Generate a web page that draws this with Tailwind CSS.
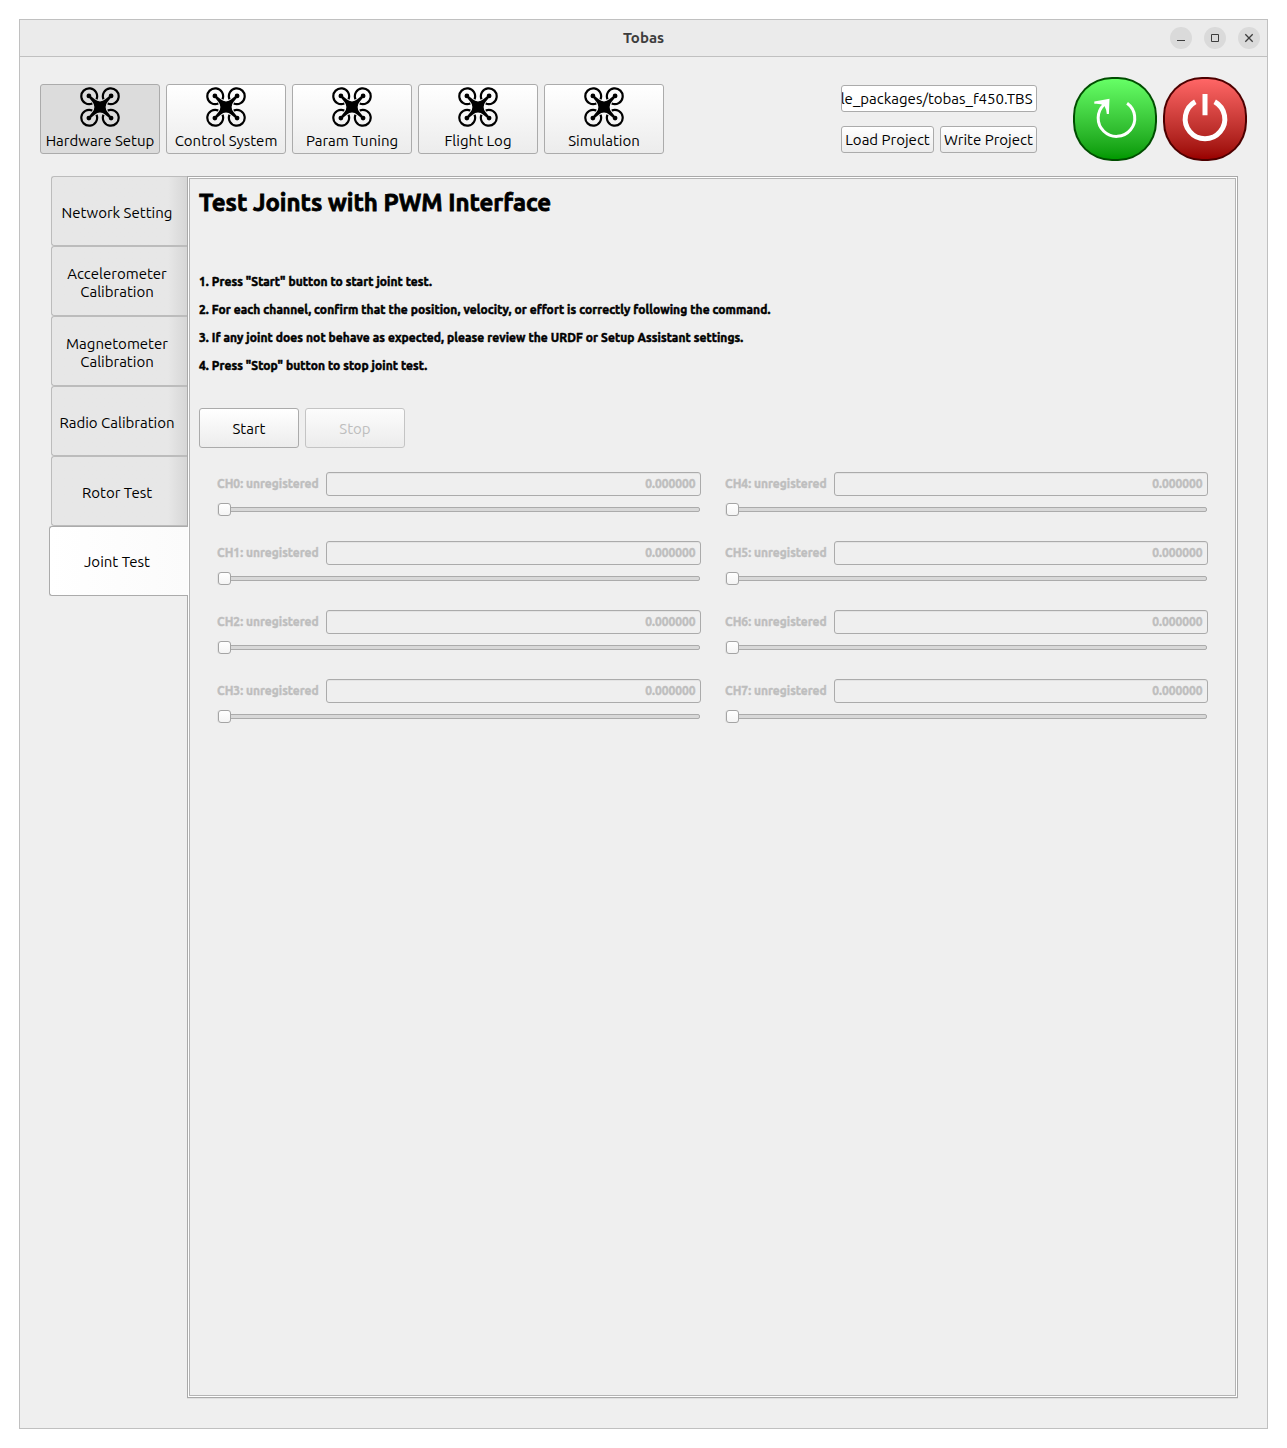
<!DOCTYPE html>
<html lang="en">
<head>
<meta charset="utf-8">
<title>Tobas</title>
<script src="https://cdn.jsdelivr.net/npm/@tailwindcss/browser@4"></script>
</head>
<body class="h-[1448px] w-[1287px] overflow-hidden bg-white p-[19px] font-['Ubuntu','Noto_Sans',sans-serif] text-[15px] leading-[18px] text-black">
<svg class="hidden">
  <symbol id="drone" viewBox="0 0 40 40">
    <g id="rotor">
      <path d="M16.500 12.300A7.900 7.900 0 1 0 12.300 16.500" fill="none" stroke="#000" stroke-width="2.200"/>
      <circle cx="8.9" cy="8.9" r="2.4"/>
      <path d="M8.200 9.800L12.300 14.700Q14.400 17 14.400 20L20 20L20 14.400Q17 14.400 14.700 12.300L9.800 8.200Z"/>
    </g>
    <use href="#rotor" transform="rotate(90 20 20)"/>
    <use href="#rotor" transform="rotate(180 20 20)"/>
    <use href="#rotor" transform="rotate(270 20 20)"/>
    <path d="M15 15h10v10h-10z"/>
  </symbol>
</svg>

<div class="flex h-[1410px] w-[1249px] flex-col border border-[#c0c0c0] bg-[#efefef]">
  <header class="grid h-[37px] shrink-0 grid-cols-[1fr_auto_1fr] items-center border-b border-[#c0c0c0] bg-[#ebebeb]">
    <h1 class="col-start-2 text-[15px] font-bold text-[#3d3d3d]">Tobas</h1>
    <div class="flex justify-end gap-3 pr-[7px]">
      <svg class="size-[22px]" viewBox="0 0 22 22"><circle cx="11" cy="11" r="11" fill="#dadada"/><path d="M7 13.500h8" stroke="#3d3d3d"/></svg>
      <svg class="size-[22px]" viewBox="0 0 22 22"><circle cx="11" cy="11" r="11" fill="#dadada"/><path d="M7.500 7.500h7v7h-7z" fill="none" stroke="#3d3d3d"/></svg>
      <svg class="size-[22px]" viewBox="0 0 22 22"><circle cx="11" cy="11" r="11" fill="#dadada"/><path d="M7.300 7.300l7.400 7.400M14.700 7.300l-7.400 7.400" stroke="#3d3d3d" stroke-width="1.300"/></svg>
    </div>
  </header>

  <div class="flex h-[119px] shrink-0 pl-5 pr-5 pt-5">
    <nav class="flex gap-1.5 pt-[7px]">
      <button class="flex h-[70px] w-[120px] flex-col items-center rounded-[3px] border border-[#ababab] bg-[#dcdcdc] pt-0.5"><svg class="size-10"><use href="#drone"/></svg><span class="mt-[5px] whitespace-nowrap">Hardware Setup</span></button>
      <button class="flex h-[70px] w-[120px] flex-col items-center rounded-[3px] border border-[#ababab] bg-linear-to-b from-white to-[#ececec] pt-0.5"><svg class="size-10"><use href="#drone"/></svg><span class="mt-[5px] whitespace-nowrap">Control System</span></button>
      <button class="flex h-[70px] w-[120px] flex-col items-center rounded-[3px] border border-[#ababab] bg-linear-to-b from-white to-[#ececec] pt-0.5"><svg class="size-10"><use href="#drone"/></svg><span class="mt-[5px] whitespace-nowrap">Param Tuning</span></button>
      <button class="flex h-[70px] w-[120px] flex-col items-center rounded-[3px] border border-[#ababab] bg-linear-to-b from-white to-[#ececec] pt-0.5"><svg class="size-10"><use href="#drone"/></svg><span class="mt-[5px] whitespace-nowrap">Flight Log</span></button>
      <button class="flex h-[70px] w-[120px] flex-col items-center rounded-[3px] border border-[#ababab] bg-linear-to-b from-white to-[#ececec] pt-0.5"><svg class="size-10"><use href="#drone"/></svg><span class="mt-[5px] whitespace-nowrap">Simulation</span></button>
    </nav>
    <div class="ml-auto mr-9 flex w-[196px] flex-col gap-3.5 pt-2">
      <div class="flex h-[27px] items-center justify-end overflow-hidden rounded-[3px] border border-[#ababab] bg-white pr-[3.500px]"><span class="whitespace-nowrap">le_packages/tobas_f450.TBS</span></div>
      <div class="flex gap-1.5">
        <button class="h-[27px] w-[93px] whitespace-nowrap rounded-[3px] border border-[#ababab] bg-linear-to-b from-white to-[#ececec]">Load Project</button>
        <button class="h-[27px] w-[97px] whitespace-nowrap rounded-[3px] border border-[#ababab] bg-linear-to-b from-white to-[#ececec]">Write Project</button>
      </div>
    </div>
    <div class="flex gap-1.5">
      <button class="size-[84px] rounded-[39px] bg-[#004d00] p-0.5" aria-label="Restart">
        <span class="block size-20 rounded-[37px] bg-linear-to-b from-[#66ff66] to-[#009900]">
          <svg class="size-20" viewBox="2 2 80 80"><path d="M54.100 26.200A18.300 18.300 0 1 1 31.200 27.500" fill="none" stroke="#fff" stroke-width="3"/><path d="M21.300 24.600L36.500 21.800L35.900 37L33.800 37Q33.500 32.500 31.500 29Q27.500 26.200 21.300 26.800Z" fill="#fff"/></svg>
        </span>
      </button>
      <button class="size-[84px] rounded-[39px] bg-[#4d0000] p-0.5" aria-label="Power">
        <span class="block size-20 rounded-[37px] bg-linear-to-b from-[#ff6666] to-[#990000]">
          <svg class="size-20" viewBox="2 2 80 80"><path d="M32.300 24.700A19.800 19.800 0 1 0 51.700 24.700M42 17v21.300" fill="none" stroke="#fff" stroke-width="5"/></svg>
        </span>
      </button>
    </div>
  </div>

  <div class="flex h-[1223px] pl-[29px]">
    <aside class="z-10 flex w-[138px] shrink-0 flex-col text-center">
      <div class="ml-0.5 flex h-[70px] w-[136px] items-center justify-center rounded-l-[3px] border border-r-0 border-[#bcbcbc] bg-linear-to-r from-[#e7e7e7] from-86% to-[#d6d6d6] pr-[5px] pt-[3px]">Network Setting</div>
      <div class="ml-0.5 flex h-[70px] w-[136px] items-center justify-center rounded-l-[3px] border border-r-0 border-[#bcbcbc] bg-linear-to-r from-[#e7e7e7] from-86% to-[#d6d6d6] pr-[5px] pt-[3px]">Accelerometer<br>Calibration</div>
      <div class="ml-0.5 flex h-[70px] w-[136px] items-center justify-center rounded-l-[3px] border border-r-0 border-[#bcbcbc] bg-linear-to-r from-[#e7e7e7] from-86% to-[#d6d6d6] pr-[5px] pt-[3px]">Magnetometer<br>Calibration</div>
      <div class="ml-0.5 flex h-[70px] w-[136px] items-center justify-center rounded-l-[3px] border border-r-0 border-[#bcbcbc] bg-linear-to-r from-[#e7e7e7] from-86% to-[#d6d6d6] pr-[5px] pt-[3px]">Radio Calibration</div>
      <div class="ml-0.5 flex h-[70px] w-[136px] items-center justify-center rounded-l-[3px] border border-r-0 border-[#bcbcbc] bg-linear-to-r from-[#e7e7e7] from-86% to-[#d6d6d6] pr-[5px] pt-[3px]">Rotor Test</div>
      <div class="flex h-[70px] w-[139px] items-center justify-center rounded-l-[3px] border border-r-0 border-[#ababab] bg-linear-to-r from-white to-[#fbfbfb] pr-1 pt-px">Joint Test</div>
    </aside>

    <main class="h-[1222px] w-[1051px] shrink-0 border border-[#a9a9a9] bg-white p-px shadow-[0_1px_0_#e0e0e0]">
      <div class="h-full border border-[#b4b4b4] bg-[#efefef] pl-[9px] pr-[27px] pt-[9px]">
        <h2 class="whitespace-nowrap text-[24px] font-bold leading-[30px] [-webkit-text-stroke:0.8px]">Test Joints with PWM Interface</h2>
        <ol class="mt-[50px] text-xs font-bold leading-[28px] tracking-[0.08px] [-webkit-text-stroke:0.5px]">
          <li>1. Press "Start" button to start joint test.</li>
          <li>2. For each channel, confirm that the position, velocity, or effort is correctly following the command.</li>
          <li>3. If any joint does not behave as expected, please review the URDF or Setup Assistant settings.</li>
          <li>4. Press "Stop" button to stop joint test.</li>
        </ol>
        <div class="mt-7 flex gap-1.5">
          <button class="h-10 w-[100px] rounded-[3px] border border-[#ababab] bg-linear-to-b from-white to-[#ececec] pt-0.5">Start</button>
          <button class="h-10 w-[100px] rounded-[3px] border border-[#c4c4c4] bg-linear-to-b from-[#fcfcfc] to-[#ececec] pt-0.5 text-[#bebebe]" disabled>Stop</button>
        </div>
        <div id="channels" class="ml-[18px] mt-6 grid grid-flow-col grid-cols-[484px_483px] grid-rows-[repeat(4,69px)] gap-x-6"></div>
      </div>
    </main>
  </div>
</div>

<template id="channel">
  <div>
    <div class="flex h-6 items-center text-xs font-bold text-[#bebebe] [-webkit-text-stroke:0.4px]">
      <label class="w-[109px] shrink-0 whitespace-nowrap"></label>
      <output class="flex h-6 grow items-center justify-end rounded-[3px] border border-[#ababab] pr-[4.500px] shadow-[inset_0_1px_0_#e4e4e4]">0.000000</output>
    </div>
    <div class="mt-1.5 flex h-[14px] items-center pr-px">
      <div class="z-10 ml-px h-[13px] w-[13px] shrink-0 rounded-[3px] border border-[#a4a4a4] bg-linear-to-b from-white to-[#f4f4f4] shadow-[-1px_0_0_#e3e3e3]"></div>
      <div class="-ml-px h-[5px] grow rounded-r-[2px] border border-[#ababab] bg-[#d8d8d8]"></div>
    </div>
  </div>
</template>
<script>
  const grid = document.getElementById('channels');
  const template = document.getElementById('channel');
  for (let i = 0; i < 8; i++) {
    const row = template.content.cloneNode(true);
    row.querySelector('label').textContent = `CH${i}: unregistered`;
    grid.append(row);
  }
</script>
</body>
</html>
